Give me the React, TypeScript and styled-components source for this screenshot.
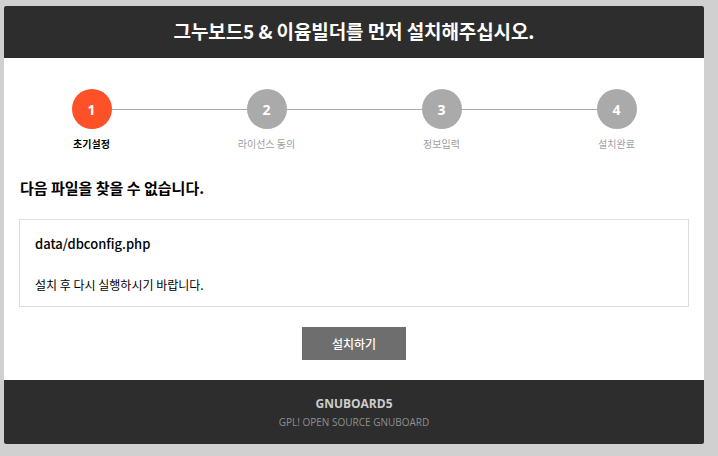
import React from 'react'
import styled, { createGlobalStyle } from 'styled-components'

interface StepProps {
  active?: boolean,
}

const steps: string[] = ['초기설정', '라이선스 동의', '정보입력', '설치완료'];

const GlobalStyle = createGlobalStyle`
  html, body {
    margin: 0;
    padding: 0;
    background: #d0d0d0;
  }
  body {
    font-family: "Noto Sans CJK KR", "Noto Sans", sans-serif;
    color: #000;
  }
`;

const Wrapper = styled.div`
  width: 700px;
  margin: 6px 0 0 4px;
  background: #fff;
  border-radius: 2px;
  overflow: hidden;
`;

const Header = styled.h1`
  margin: 0;
  height: 52px;
  line-height: 50px;
  padding-bottom: 2px;
  box-sizing: border-box;
  background: #2d2d2d;
  color: #fff;
  font-size: 19px;
  font-weight: 700;
  text-align: center;
  letter-spacing: -0.1px;
`;

const Body = styled.div`
  padding: 31px 15px 20px;
`;

const StepList = styled.ol`
  position: relative;
  display: grid;
  grid-template-columns: repeat(4, 1fr);
  list-style: none;
  margin: 0 -15px;
  padding: 0;

  &::before {
    content: '';
    position: absolute;
    top: 20px;
    left: 12.5%;
    right: 12.5%;
    height: 1px;
    background: #aaa;
  }
`;

const Step = styled.li`
  position: relative;
  display: flex;
  flex-direction: column;
  align-items: center;
`;

const Circle = styled.span<StepProps>`
  width: 40px;
  height: 40px;
  border-radius: 50%;
  background: ${({ active }) => (active ? '#ff5128' : '#aaa')};
  color: #fff;
  font-family: "Open Sans", "Noto Sans", sans-serif;
  font-size: 14px;
  font-weight: 700;
  display: flex;
  align-items: center;
  justify-content: center;
`;

const StepLabel = styled.span<StepProps>`
  margin-top: 8px;
  font-size: 10px;
  line-height: 14px;
  font-weight: ${({ active }) => (active ? 700 : 400)};
  color: ${({ active }) => (active ? '#000' : '#9e9e9e')};
`;

const Title = styled.h2`
  margin: 27px 0 0 1px;
  font-size: 15px;
  line-height: 20px;
  font-weight: 700;
`;

const MessageBox = styled.div`
  margin-top: 21px;
  border: 1px solid #ddd;
  padding: 15px 15px 12px;
`;

const FileName = styled.p`
  margin: 0;
  font-size: 13px;
  line-height: 18px;
  font-weight: 500;
`;

const Note = styled.p`
  margin: 23px 0 0;
  font-size: 12px;
  line-height: 18px;
`;

const Actions = styled.div`
  display: flex;
  justify-content: center;
  margin-top: 20px;
`;

const InstallButton = styled.button`
  width: 104px;
  height: 33px;
  border: 0;
  background: #6e6e6e;
  color: #fff;
  font-family: "Noto Sans CJK KR", sans-serif;
  font-size: 12px;
  font-weight: 500;
  cursor: pointer;
`;

const Footer = styled.footer`
  height: 64px;
  background: #2d2d2d;
  display: flex;
  flex-direction: column;
  align-items: center;
  justify-content: center;
  font-family: "Open Sans", "Noto Sans", sans-serif;
`;

const Brand = styled.strong`
  color: #ccc;
  font-size: 12px;
  line-height: 18px;
  font-weight: 700;
`;

const License = styled.span`
  margin-top: 2px;
  color: #8f8f8f;
  font-size: 10px;
  line-height: 14px;
`;

const App: React.FC = () => {
  return (
    <>
      <GlobalStyle />
      <Wrapper>
        <Header>그누보드5 &amp; 이윰빌더를 먼저 설치해주십시오.</Header>
        <Body>
          <StepList>
            {steps.map((label, i) => (
              <Step key={label}>
                <Circle active={i === 0}>{i + 1}</Circle>
                <StepLabel active={i === 0}>{label}</StepLabel>
              </Step>
            ))}
          </StepList>
          <Title>다음 파일을 찾을 수 없습니다.</Title>
          <MessageBox>
            <FileName>data/dbconfig.php</FileName>
            <Note>설치 후 다시 실행하시기 바랍니다.</Note>
          </MessageBox>
          <Actions>
            <InstallButton>설치하기</InstallButton>
          </Actions>
        </Body>
        <Footer>
          <Brand>GNUBOARD5</Brand>
          <License>GPL! OPEN SOURCE GNUBOARD</License>
        </Footer>
      </Wrapper>
    </>
  )
}

export default App;
